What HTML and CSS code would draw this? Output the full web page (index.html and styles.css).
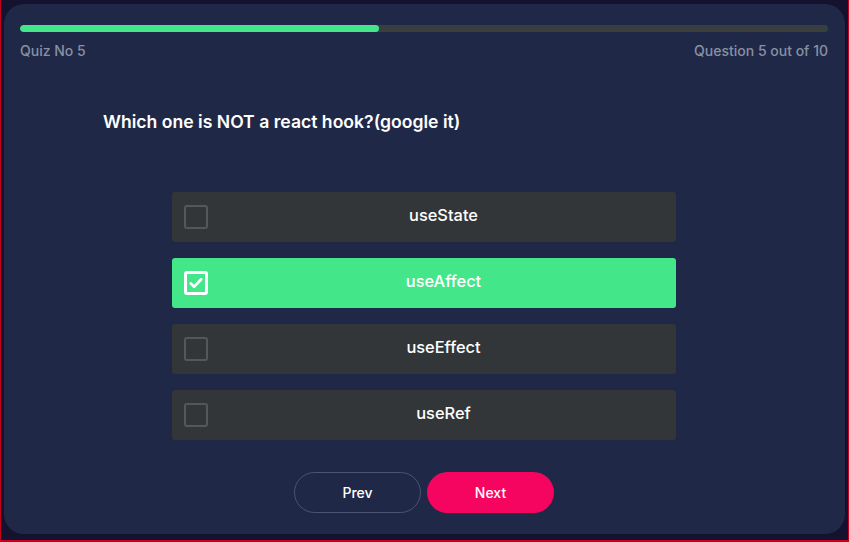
FILE: index.html
```html
<!DOCTYPE html>
<html>
<head>
<meta charset="utf-8">
<link rel="stylesheet" href="styles.css">
</head>
<body>
<div class="frame">
  <div class="card">
    <div class="progress"><div class="fill" style="width:44.4%"></div></div>
    <div class="meta">
      <span>Quiz No 5</span>
      <span>Question 5 out of 10</span>
    </div>
    <h2 class="question">Which one is NOT a react hook?(google it)</h2>
    <div class="options">
      <div class="option"><span class="box"></span><span class="label">useState</span></div>
      <div class="option selected"><span class="box"><svg viewBox="0 0 24 24" width="18" height="18"><path d="M5 12.5l4.5 4.5L19 7" fill="none" stroke="#fff" stroke-width="3.6" stroke-linecap="round" stroke-linejoin="round"/></svg></span><span class="label">useAffect</span></div>
      <div class="option"><span class="box"></span><span class="label">useEffect</span></div>
      <div class="option"><span class="box"></span><span class="label">useRef</span></div>
    </div>
    <div class="buttons">
      <button class="btn prev">Prev</button>
      <button class="btn next">Next</button>
    </div>
  </div>
</div>
</body>
</html>
```
FILE: styles.css
```css
* { box-sizing: border-box; }
html, body { margin: 0; padding: 0; }
body {
  width: 849px;
  height: 542px;
  font-family: Inter, "Open Sans", sans-serif;
  background: #c8001c;
}
.frame {
  margin: 0 1px;
  height: 540px;
  background: #14122e;
  padding: 4px 3px 6px 3px;
}
.card {
  height: 530px;
  background: #1f2947;
  border-radius: 20px;
  padding: 21px 17px 0 16px;
}
.progress {
  height: 7px;
  background: #393e3f;
  border-radius: 4px;
  overflow: hidden;
}
.fill {
  height: 100%;
  background: #44e68a;
  border-radius: 4px;
}
.meta {
  display: flex;
  justify-content: space-between;
  margin-top: 10px;
  color: #8a90a3;
  font-size: 14px;
  font-weight: 500;
  line-height: 17px;
}
.question {
  margin: 52px 0 0 83px;
  color: #fff;
  font-size: 17.6px;
  font-weight: 600;
  line-height: 22px;
}
.options {
  margin: 59px auto 0;
  width: 504px;
  display: flex;
  flex-direction: column;
  gap: 16px;
}
.option {
  height: 50px;
  background: #333638;
  border-radius: 3px;
  display: flex;
  align-items: center;
  padding-left: 12px;
  color: #fff;
  font-size: 16.4px;
  font-weight: 500;
}
.option.selected { background: #44e68a; }
.box {
  width: 24px;
  height: 24px;
  border: 2px solid #54585b;
  border-radius: 3px;
  display: flex;
  align-items: center;
  justify-content: center;
}
.selected .box { border: 3px solid #fff; }
.label {
  flex: 1;
  text-align: center;
  margin-top: -4px;
  padding-left: 3px;
}
.buttons {
  display: flex;
  justify-content: center;
  gap: 6px;
  margin-top: 32px;
}
.btn {
  width: 127px;
  height: 41px;
  border-radius: 21px;
  font-family: inherit;
  font-size: 14px;
  font-weight: 500;
  color: #fff;
  cursor: pointer;
}
.prev {
  background: transparent;
  border: 1px solid #4b5570;
}
.next {
  background: #f5055f;
  border: none;
}
```
